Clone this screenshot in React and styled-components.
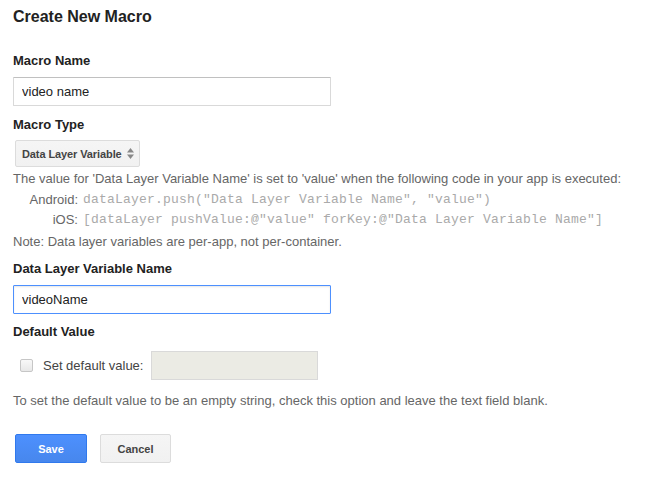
import React from 'react';
import styled, { createGlobalStyle } from 'styled-components';

const GlobalStyle = createGlobalStyle`
  body {
    margin: 0;
    background: #fff;
    font-family: Arial, "Liberation Sans", sans-serif;
    font-size: 13px;
    color: #222;
  }
`;

const Page = styled.div`
  padding: 7px 13px 0;
`;

const Title = styled.h1`
  margin: 0;
  font-size: 16px;
  line-height: 20px;
  font-weight: bold;
  color: #222;
`;

const Label = styled.div`
  margin-top: ${(p) => p.$top}px;
  font-weight: bold;
  font-size: 13px;
  line-height: 16px;
  color: #222;
`;

const TextInput = styled.input`
  display: block;
  box-sizing: border-box;
  width: 318px;
  height: 29px;
  margin: ${(p) => p.$top}px 0 0;
  padding: 0 8px;
  border: 1px solid ${(p) => (p.$focused ? '#4d90fe' : '#d9d9d9')};
  border-top-color: ${(p) => (p.$focused ? '#4d90fe' : '#c0c0c0')};
  border-radius: 1px;
  font-family: Arial, "Liberation Sans", sans-serif;
  font-size: 13px;
  color: #222;
  outline: none;
  box-shadow: ${(p) => (p.$focused ? 'inset 0 1px 2px rgba(0,0,0,0.1)' : 'none')};
`;

const SelectButton = styled.div`
  display: inline-flex;
  align-items: center;
  gap: 5px;
  box-sizing: border-box;
  height: 27px;
  margin: 7px 0 0 2px;
  padding: 0 5px 0 6px;
  border: 1px solid #dcdcdc;
  border-radius: 2px;
  background: linear-gradient(#f5f5f5, #f1f1f1);
  font-size: 11px;
  font-weight: bold;
  letter-spacing: -0.1px;
  color: #444;
`;

const Help = styled.div`
  margin-top: ${(p) => p.$top}px;
  line-height: 16px;
  color: #666;
`;

const CodeBlock = styled.div`
  margin-top: 2px;
`;

const CodeRow = styled.div`
  display: flex;
  align-items: center;
  height: 20px;
  color: #666;
`;

const Platform = styled.span`
  width: 65px;
  text-align: right;
  margin-right: 5px;
`;

const Code = styled.span`
  font-family: "Liberation Mono", "Courier New", monospace;
  font-size: 13px;
  letter-spacing: 0.2px;
  color: #aaa;
`;

const CheckRow = styled.div`
  display: flex;
  align-items: center;
  height: 29px;
  margin-top: 11px;
  padding-left: 7px;
`;

const CheckBox = styled.span`
  box-sizing: border-box;
  width: 13px;
  height: 13px;
  border: 1px solid #c6c6c6;
  border-radius: 2px;
  background: linear-gradient(#f8f8f8, #e8e8e8);
`;

const CheckText = styled.span`
  margin-left: 10px;
  color: #444;
`;

const DisabledInput = styled.div`
  box-sizing: border-box;
  width: 167px;
  height: 29px;
  margin-left: 8px;
  border: 1px solid #d9d9d9;
  background: #ebebe4;
`;

const Buttons = styled.div`
  display: flex;
  gap: 13px;
  margin-top: 25px;
  padding-left: 2px;
`;

const Button = styled.button`
  box-sizing: border-box;
  height: 29px;
  min-width: ${(p) => (p.$primary ? 72 : 71)}px;
  padding: 0 14px;
  border: 1px solid ${(p) => (p.$primary ? '#3079ed' : '#dcdcdc')};
  border-radius: 2px;
  background: ${(p) => (p.$primary ? 'linear-gradient(#4d90fe, #4787ed)' : 'linear-gradient(#f5f5f5, #f1f1f1)')};
  color: ${(p) => (p.$primary ? '#fff' : '#444')};
  font-family: Arial, "Liberation Sans", sans-serif;
  font-size: 11px;
  font-weight: bold;
`;

const Arrows = () => (
  <svg width="7" height="11" viewBox="0 0 7 11">
    <path d="M3.5 0 L7 4.5 L0 4.5 Z" fill="#888" />
    <path d="M3.5 11 L7 6.5 L0 6.5 Z" fill="#888" />
  </svg>
);

export default function App() {
  return (
    <Page>
      <GlobalStyle />
      <Title>Create New Macro</Title>

      <Label $top={26}>Macro Name</Label>
      <TextInput $top={8} defaultValue="video name" />

      <Label $top={11}>Macro Type</Label>
      <SelectButton>
        Data Layer Variable
        <Arrows />
      </SelectButton>

      <Help $top={4}>
        The value for 'Data Layer Variable Name' is set to 'value' when the following code in your app is executed:
      </Help>
      <CodeBlock>
        <CodeRow>
          <Platform>Android:</Platform>
          <Code>dataLayer.push("Data Layer Variable Name", "value")</Code>
        </CodeRow>
        <CodeRow>
          <Platform>iOS:</Platform>
          <Code>[dataLayer pushValue:@"value" forKey:@"Data Layer Variable Name"]</Code>
        </CodeRow>
      </CodeBlock>
      <Help $top={5}>Note: Data layer variables are per-app, not per-container.</Help>

      <Label $top={11}>Data Layer Variable Name</Label>
      <TextInput $top={8} $focused defaultValue="videoName" />

      <Label $top={10}>Default Value</Label>
      <CheckRow>
        <CheckBox />
        <CheckText>Set default value:</CheckText>
        <DisabledInput />
      </CheckRow>

      <Help $top={13}>
        To set the default value to be an empty string, check this option and leave the text field blank.
      </Help>

      <Buttons>
        <Button $primary>Save</Button>
        <Button>Cancel</Button>
      </Buttons>
    </Page>
  );
}
